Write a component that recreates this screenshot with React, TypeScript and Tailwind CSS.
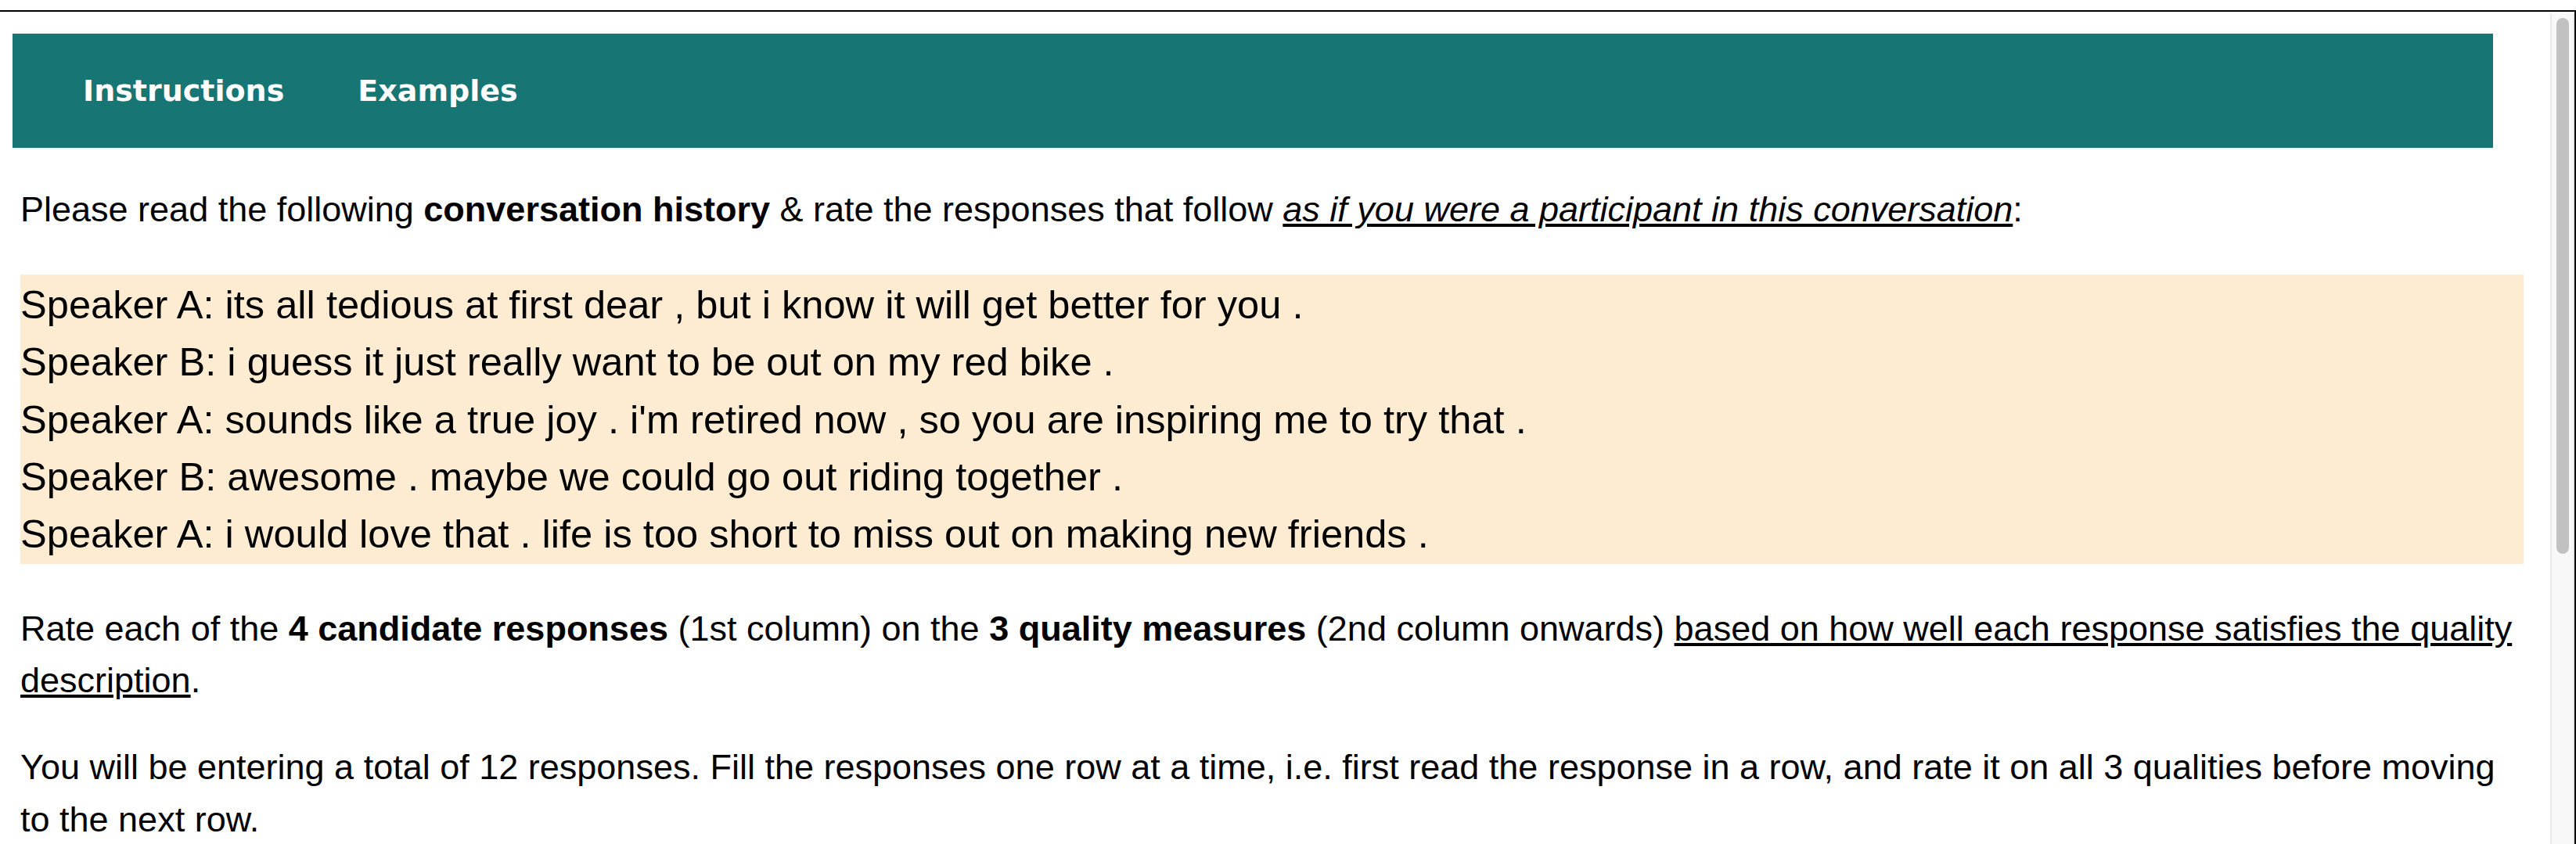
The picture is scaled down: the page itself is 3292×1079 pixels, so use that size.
const conversation = [
  "Speaker A: its all tedious at first dear , but i know it will get better for you .",
  "Speaker B: i guess it just really want to be out on my red bike .",
  "Speaker A: sounds like a true joy . i'm retired now , so you are inspiring me to try that .",
  "Speaker B: awesome . maybe we could go out riding together .",
  "Speaker A: i would love that . life is too short to miss out on making new friends .",
];

export default function App() {
  return (
    <div className="h-[1079px] overflow-hidden bg-white pt-[13px]">
      <div className="flex h-full border-t-2 border-r-2 border-black">
        <main className="flex-1 font-['Liberation_Sans',Arial,sans-serif] text-black">
          <nav className="ml-[16px] mt-[28px] flex h-[146px] w-[3170px] items-center gap-[94px] bg-[#177573] pl-[90px] font-['DejaVu_Sans',Verdana,sans-serif] text-[38px] font-bold text-white">
            <a className="cursor-pointer">Instructions</a>
            <a className="cursor-pointer">Examples</a>
          </nav>

          <div className="ml-[26px] w-[3199px]">
            <p className="mt-[46px] text-[45px] leading-[66.7px]">
              Please read the following <b>conversation history</b> &amp; rate
              the responses that follow{" "}
              <i className="underline decoration-[4px] underline-offset-[3px]">
                as if you were a participant in this conversation
              </i>
              :
            </p>

            <div className="mt-[49px] bg-[#fdebd2] pt-[2px] pb-[1px] text-[50.6px] leading-[73.4px]">
              {conversation.map((line, i) => (
                <div key={i}>{line}</div>
              ))}
            </div>

            <p className="mt-[50px] text-[45px] leading-[66.7px]">
              Rate each of the <b>4 candidate responses</b> (1st column) on the{" "}
              <b>3 quality measures</b> (2nd column onwards){" "}
              <span className="underline decoration-[4px] underline-offset-[3px]">
                based on how well each response satisfies the quality
                description
              </span>
              .
            </p>

            <p className="mt-[44px] text-[45px] leading-[66.7px]">
              You will be entering a total of 12 responses. Fill the responses
              one row at a time, i.e. first read the response in a row, and rate
              it on all 3 qualities before moving to the next row.
            </p>
          </div>
        </main>

        <div className="mt-[2px] w-[31px] shrink-0 border-l-2 border-r-2 border-[#e9e9e9] bg-[#f8f8f8] pl-[6px]">
          <div className="mt-[6px] h-[685px] w-[16px] rounded-full bg-[#c1c1c1]" />
        </div>
      </div>
    </div>
  );
}
